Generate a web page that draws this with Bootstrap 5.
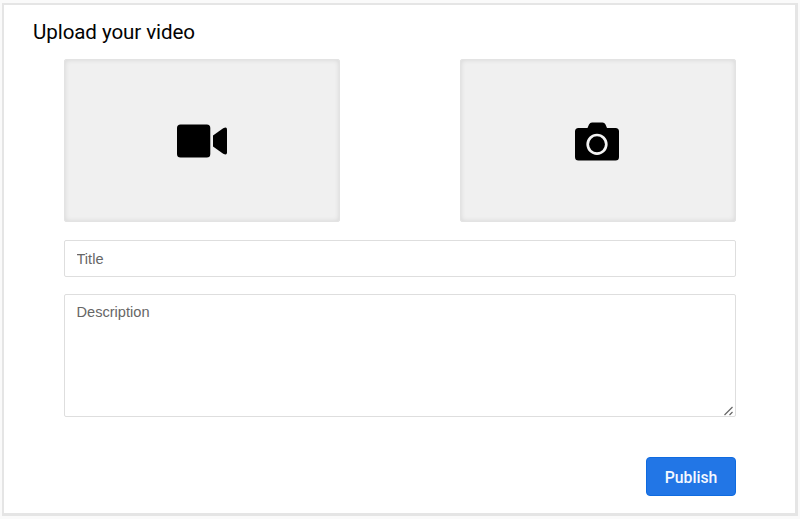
<!DOCTYPE html>
<html lang="en">
<head>
<meta charset="utf-8">
<meta name="viewport" content="width=device-width, initial-scale=1">
<title>Upload your video</title>
<link href="https://cdn.jsdelivr.net/npm/bootstrap@5.3.0/dist/css/bootstrap.min.css" rel="stylesheet">
<style>
  body { background: #fafafa; font-family: Roboto, sans-serif; height: 519px; padding: 3px 2px 3px; overflow: hidden; }
  .upload-panel { height: 513px; border: 2px solid #e5e5e5; border-right-width: 3px; border-bottom-width: 3px; }
  .upload-title { font-size: 20.6px; line-height: 24px; font-weight: 400; color: #030303; margin: 15px 0 15px 29px; letter-spacing: -.1px; }
  .upload-form { margin: 0 59px 0 59.5px; }
  .drop-tile { width: 276.5px; height: 163px; background: #f0f0f0; border: 1px solid #e3e3e3; border-radius: 2px; box-shadow: inset 0 0 5px rgba(0,0,0,.11); }
  .drop-tile svg { margin-top: 1px; }
  .camera-icon { margin-right: 1px; }
  .upload-field.form-control { font: 400 14.6px/20px "Liberation Sans", Arial, sans-serif; border: 1px solid #dedede; border-radius: 2px; padding: 7px 12px; }
  .upload-field::placeholder { color: #666; opacity: 1; }
  .title-field { height: 37px; margin-top: 18px; }
  .description-field.form-control { height: 123px; min-height: 0; resize: none; }
  .description-wrap { margin-top: 17px; }
  .resize-grip { right: 2px; bottom: 1px; pointer-events: none; }
  .publish-btn.btn { width: 90px; height: 39px; margin-top: 40px; padding: 2px 0 0; font-size: 15.8px; font-weight: 500; border-radius: 4px; background: #2276e6; border: 1px solid #0f6be0; color: #f4f8ff; }
</style>
</head>
<body>
<main class="upload-panel bg-white overflow-hidden">
  <h1 class="upload-title">Upload your video</h1>
  <form class="upload-form d-flex flex-column">
    <div class="d-flex justify-content-between">
      <div class="drop-tile d-flex align-items-center justify-content-center" role="button" aria-label="Choose video">
        <svg width="50" height="34" viewBox="0 0 50 34"><rect x="0" y="0.5" width="33.3" height="33" rx="3.5"/><path d="M36 11.5 46.2 4.3Q50 2.2 50 5.5V28.5Q50 31.8 46.2 29.7L36 22.5Z"/></svg>
      </div>
      <div class="drop-tile d-flex align-items-center justify-content-center" role="button" aria-label="Choose thumbnail">
        <svg class="camera-icon" width="44" height="39" viewBox="0 0 44 39"><path d="M3.5 6H12.5L14 2.5Q15 .5 17 .5H27.5Q29.5 .5 30.5 2.5L32 6H40.5Q44 6 44 9.5V35Q44 38.5 40.5 38.5H3.5Q0 38.5 0 35V9.5Q0 6 3.5 6Z"/><circle cx="22" cy="22.3" r="9.3" fill="none" stroke="#f3f3f3" stroke-width="2.7"/></svg>
      </div>
    </div>
    <input class="form-control upload-field title-field" type="text" placeholder="Title">
    <div class="description-wrap position-relative d-flex">
      <textarea class="form-control upload-field description-field" placeholder="Description"></textarea>
      <svg class="resize-grip position-absolute" width="10" height="10" viewBox="0 0 10 10" fill="none" stroke="#666" stroke-width="1.2"><path d="M.5 9 8.5 1M5.500 9 8.500 6"/></svg>
    </div>
    <button class="btn btn-primary publish-btn align-self-end" type="button">Publish</button>
  </form>
</main>
<script src="https://cdn.jsdelivr.net/npm/bootstrap@5.3.0/dist/js/bootstrap.bundle.min.js"></script>
</body>
</html>
